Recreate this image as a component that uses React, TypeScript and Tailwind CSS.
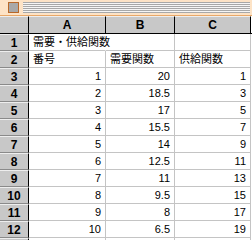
const rows: [string, string, string][] = [
  ["1", "20", "1"],
  ["2", "18.5", "3"],
  ["3", "17", "5"],
  ["4", "15.5", "7"],
  ["5", "14", "9"],
  ["6", "12.5", "11"],
  ["7", "11", "13"],
  ["8", "9.5", "15"],
  ["9", "8", "17"],
  ["10", "6.5", "19"],
];

function RowHead({ n }: { n?: number }) {
  return (
    <div className="w-[29px] h-[17px] shrink-0 bg-[#c8c8c8] border-r border-r-black border-t border-t-[#eeeeee] border-b border-b-[#8a8a8a] flex items-center justify-center text-[12px] font-bold leading-none text-black">
      {n}
    </div>
  );
}

function Cell({ w, right, spill, children }: { w: string; right?: boolean; spill?: boolean; children?: React.ReactNode }) {
  return (
    <div
      className={`${w} h-[17px] shrink-0 border-r border-b border-[#c4c4c4] bg-white flex items-center px-[4px] text-[11px] leading-none text-black whitespace-nowrap ${right ? "justify-end" : "justify-start"} ${spill ? "relative z-10 overflow-visible border-r-white" : ""}`}
    >
      {children}
    </div>
  );
}

export default function App() {
  return (
    <div className="w-[252px] h-[240px] overflow-hidden bg-white font-['Liberation_Sans','Noto_Sans_CJK_JP',sans-serif]">
      {/* title bar */}
      <div className="h-[16px] bg-[#fde3c6] border-b border-b-[#e8a868] flex items-center pl-[8px] pr-[2px] gap-[2px]">
        <div className="w-[11px] h-[11px] border border-[#b8682a] bg-[#a8a8a8] ring-1 ring-[#fde3c6]" />
        <div className="flex-1 h-[11px] ml-[2px] bg-[repeating-linear-gradient(to_bottom,#a8a8a8_0px,#a8a8a8_1px,#f6f6f6_1px,#f6f6f6_2px)]" />
      </div>

      {/* column headers */}
      <div className="flex h-[18px] border-b border-b-black">
        <div className="w-[29px] h-full bg-[#c8c8c8] border-r border-r-black border-t border-t-[#eeeeee]" />
        <div className="w-[77px] h-full bg-[#c8c8c8] border-r border-r-black border-t border-t-[#eeeeee] flex items-center justify-center text-[12px] font-bold">A</div>
        <div className="w-[69px] h-full bg-[#c8c8c8] border-r border-r-black border-t border-t-[#eeeeee] flex items-center justify-center text-[12px] font-bold">B</div>
        <div className="w-[76px] h-full bg-[#c8c8c8] border-r border-r-black border-t border-t-[#eeeeee] flex items-center justify-center text-[12px] font-bold">C</div>
      </div>

      {/* row 1 */}
      <div className="flex">
        <RowHead n={1} />
        <Cell w="w-[77px]" spill>需要・供給関数</Cell>
        <Cell w="w-[69px]" />
        <Cell w="w-[76px]" />
      </div>
      {/* row 2 */}
      <div className="flex">
        <RowHead n={2} />
        <Cell w="w-[77px]">番号</Cell>
        <Cell w="w-[69px]">需要関数</Cell>
        <Cell w="w-[76px]">供給関数</Cell>
      </div>
      {rows.map((r, i) => (
        <div className="flex" key={i}>
          <RowHead n={i + 3} />
          <Cell w="w-[77px]" right>{r[0]}</Cell>
          <Cell w="w-[69px]" right>{r[1]}</Cell>
          <Cell w="w-[76px]" right>{r[2]}</Cell>
        </div>
      ))}
      <div className="flex">
        <RowHead />
        <Cell w="w-[77px]" />
        <Cell w="w-[69px]" />
        <Cell w="w-[76px]" />
      </div>
    </div>
  );
}
